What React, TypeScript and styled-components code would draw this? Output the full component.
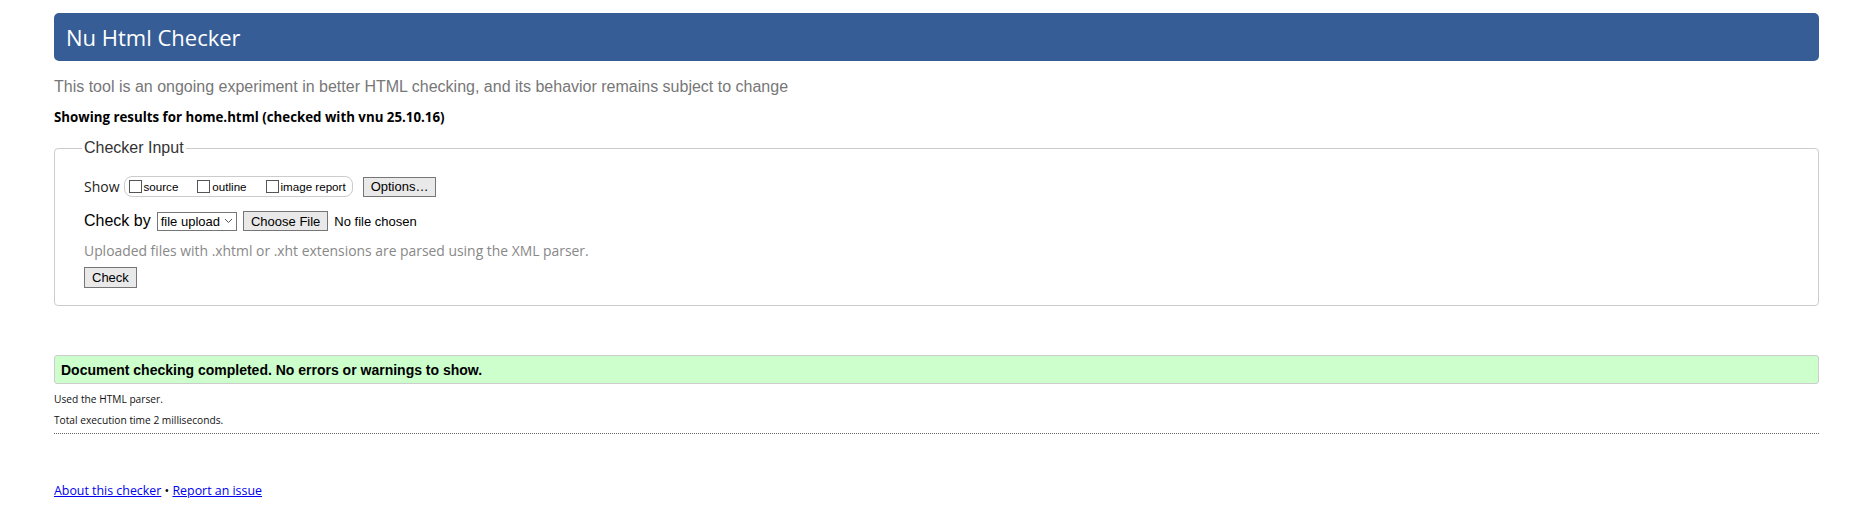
import React, { FC } from "react";
import styled, { createGlobalStyle } from "styled-components";

const GlobalStyle = createGlobalStyle`
  html, body {
    margin: 0;
    padding: 0;
    background: #fff;
  }
  body {
    font-family: "Open Sans", "Noto Sans", sans-serif;
    color: #000;
  }
`;

const Page = styled.div`
  padding: 13px 37px 16px 54px;
`;

const Banner = styled.h1`
  margin: 0;
  height: 48px;
  display: flex;
  align-items: center;
  padding: 0 12px;
  background: #365d95;
  border-radius: 5px;
  color: #fff;
  font-family: "Open Sans", sans-serif;
  font-size: 22px;
  font-weight: 400;
`;

const Intro = styled.p`
  margin: 16px 0 0;
  font-family: "Liberation Sans", Arial, sans-serif;
  font-size: 16px;
  line-height: 20px;
  color: #777;
`;

const ResultsFor = styled.p`
  margin: 10px 0 0;
  font-family: "Open Sans", sans-serif;
  font-size: 13.3px;
  font-weight: 700;
  line-height: 20px;
`;

const InputBox = styled.fieldset`
  margin: 12px 0 0;
  padding: 19px 16px 17px 29px;
  border: 1px solid #ccc;
  border-radius: 4px;
  display: flex;
  flex-direction: column;
  gap: 8px;
`;

const Legend = styled.legend`
  margin-left: -2px;
  padding: 0 2px;
  font-family: "Liberation Sans", Arial, sans-serif;
  font-size: 16px;
  color: #333;
`;

const Row = styled.div<{ $big?: boolean }>`
  display: flex;
  align-items: center;
  gap: 6px;
  margin-top: ${(p) => (p.$big ? "6px" : "0")};
  font-family: "Liberation Sans", Arial, sans-serif;
  font-size: ${(p) => (p.$big ? "16px" : "14px")};
  color: #000;
`;

const ShowLabel = styled.span`
  font-family: "Open Sans", sans-serif;
  font-size: 14px;
  color: #222;
  margin-right: -2px;
`;

const Pill = styled.span`
  display: flex;
  align-items: center;
  height: 19px;
  padding: 0 6px 0 4px;
  border: 1px solid #ccc;
  border-radius: 8px;
  margin-right: 4px;
`;

const Check = styled.label`
  display: flex;
  align-items: center;
  font-family: "Liberation Sans", Arial, sans-serif;
  font-size: 11.6px;
  margin-right: 19px;
  &:last-child {
    margin-right: 0;
  }
`;

const Box = styled.span`
  width: 11px;
  height: 11px;
  border: 1px solid #555;
  background: #fff;
  margin-right: 2px;
`;

const Btn = styled.span<{ $tall?: boolean }>`
  display: inline-flex;
  align-items: center;
  height: ${(p) => (p.$tall ? "19px" : "18px")};
  padding: 0 7px;
  border: 1px solid #767676;
  background: #e9e9e9;
  font-family: "Liberation Sans", Arial, sans-serif;
  font-size: 13px;
  color: #000;
`;

const Select = styled.span`
  display: inline-flex;
  align-items: center;
  gap: 4px;
  height: 17px;
  padding: 0 3px;
  border: 1px solid #767676;
  font-family: "Liberation Sans", Arial, sans-serif;
  font-size: 13px;
`;

const FileName = styled.span`
  font-size: 13px;
`;

const Note = styled.p`
  margin: 2px 0 -1px;
  font-family: "Open Sans", sans-serif;
  font-size: 13.9px;
  color: #888;
`;

const Success = styled.p`
  margin: 49px 0 0;
  height: 27px;
  display: flex;
  align-items: center;
  padding: 0 6px;
  background: #ccffcc;
  border: 1px solid #ccc;
  border-radius: 3px;
  font-family: "Liberation Sans", Arial, sans-serif;
  font-size: 14px;
  font-weight: 700;
`;

const Detail = styled.p<{ $first?: boolean }>`
  margin: ${(p) => (p.$first ? "8px" : "6px")} 0 0;
  font-family: "Open Sans", sans-serif;
  font-size: 10.2px;
  line-height: 15px;
  color: #111;
`;

const Rule = styled.hr`
  margin: 5px 0 0;
  border: 0;
  border-top: 1px dotted #666;
`;

const Footer = styled.p`
  margin: 48px 0 0;
  font-family: "Open Sans", sans-serif;
  font-size: 12.4px;
  a {
    color: #0000ee;
  }
`;

const Chevron = () => (
  <svg width="9" height="6" viewBox="0 0 9 6">
    <path d="M1 1l3.5 3.5L8 1" stroke="#555" fill="none" strokeWidth="1" />
  </svg>
);

const App: FC = () => {
  const options = ["source", "outline", "image report"];
  return (
    <>
      <GlobalStyle />
      <Page>
        <Banner>Nu Html Checker</Banner>
        <Intro>
          This tool is an ongoing experiment in better HTML checking, and its
          behavior remains subject to change
        </Intro>
        <ResultsFor>Showing results for home.html (checked with vnu 25.10.16)</ResultsFor>
        <InputBox>
          <Legend>Checker Input</Legend>
          <Row>
            <ShowLabel>Show</ShowLabel>
            <Pill>
              {options.map((o) => (
                <Check key={o}>
                  <Box />
                  {o}
                </Check>
              ))}
            </Pill>
            <Btn>Options…</Btn>
          </Row>
          <Row $big>
            Check by
            <Select>
              file upload <Chevron />
            </Select>
            <Btn>Choose File</Btn>
            <FileName>No file chosen</FileName>
          </Row>
          <Note>Uploaded files with .xhtml or .xht extensions are parsed using the XML parser.</Note>
          <Row>
            <Btn $tall>Check</Btn>
          </Row>
        </InputBox>
        <Success>Document checking completed. No errors or warnings to show.</Success>
        <Detail $first>Used the HTML parser.</Detail>
        <Detail>Total execution time 2 milliseconds.</Detail>
        <Rule />
        <Footer>
          <a href="#">About this checker</a> • <a href="#">Report an issue</a>
        </Footer>
      </Page>
    </>
  );
};

export default App;
